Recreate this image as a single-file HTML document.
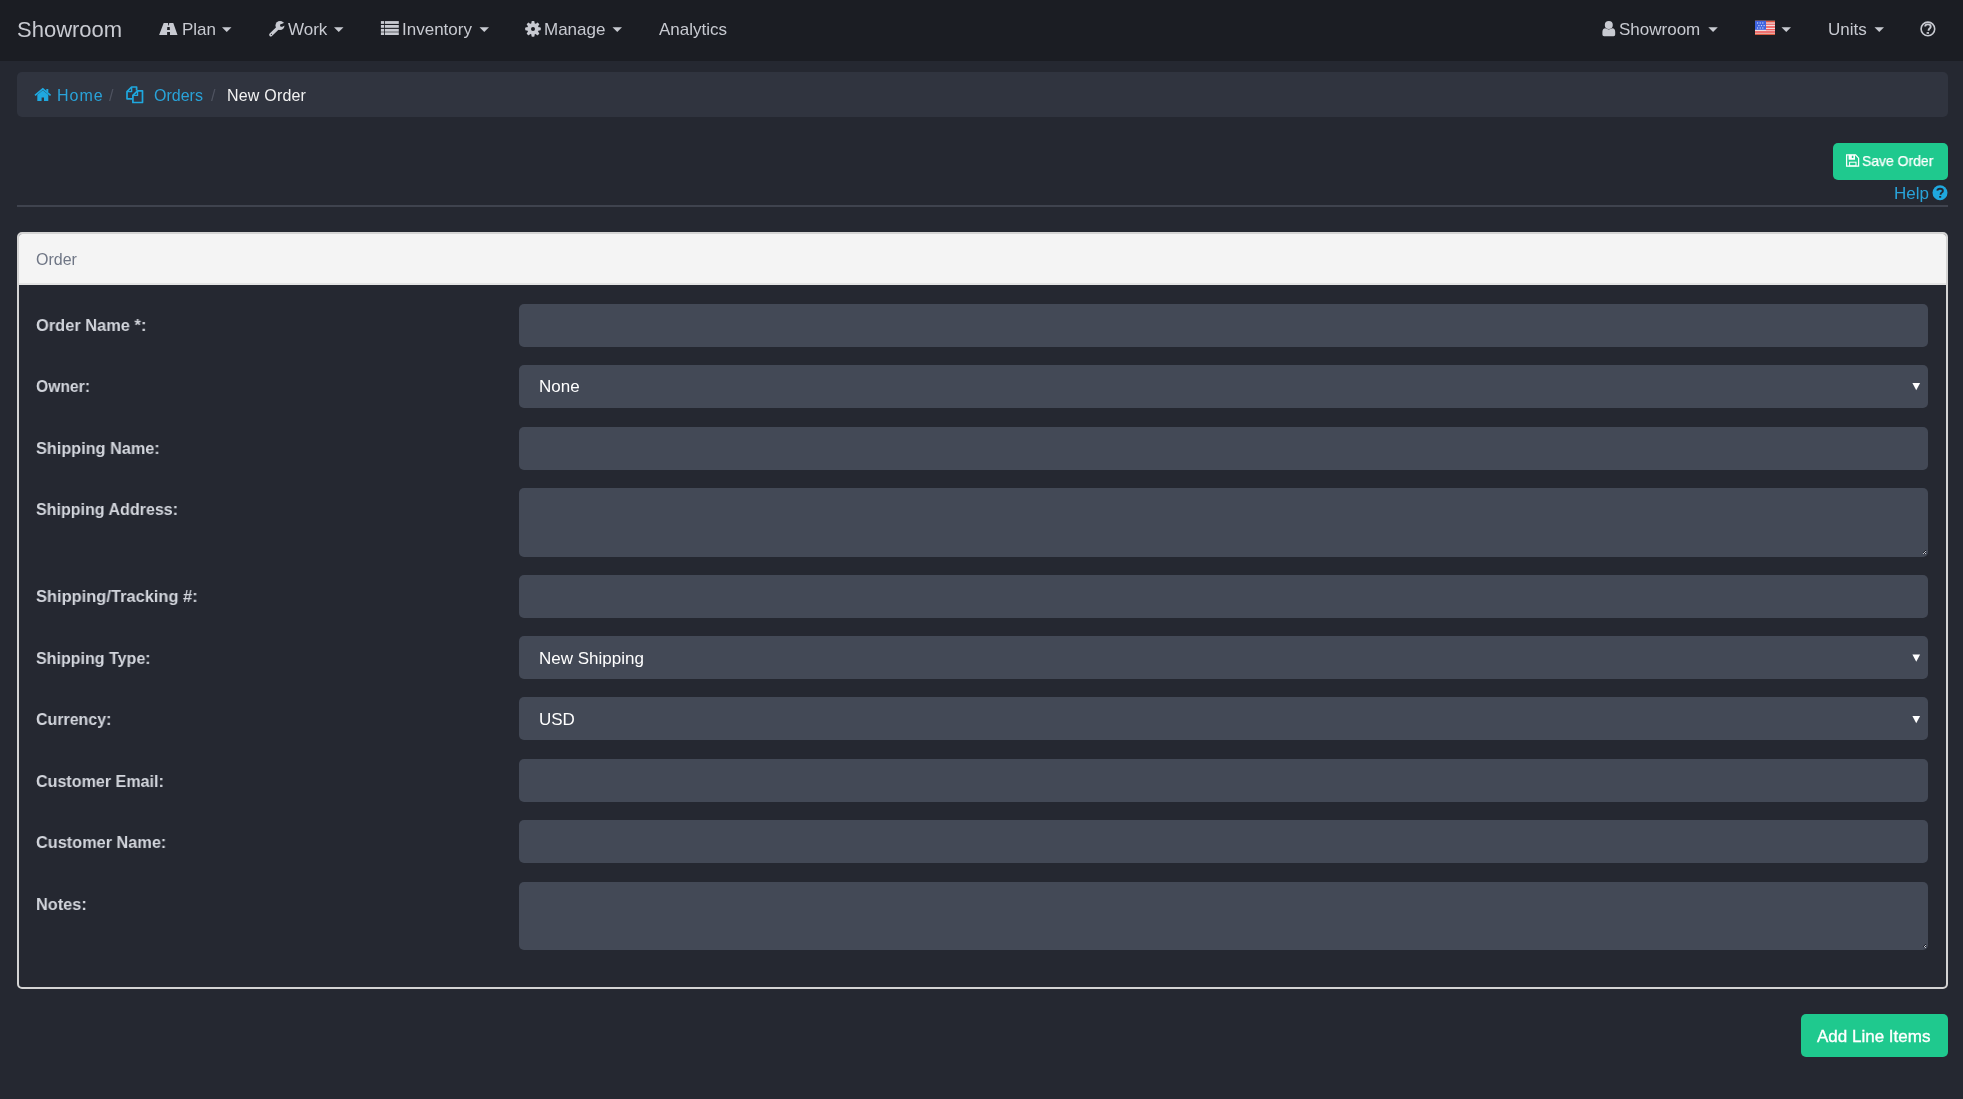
<!DOCTYPE html>
<html><head><meta charset="utf-8">
<style>
*{box-sizing:border-box;margin:0;padding:0}
html,body{width:1963px;height:1099px;overflow:hidden;background:#252831;font-family:"Liberation Sans",sans-serif;-webkit-font-smoothing:antialiased}
.nt,.brand,.bt,.lbl,.sv,.abs{will-change:transform}
.abs{position:absolute}
#nav{position:absolute;left:0;top:0;width:1963px;height:61px;background:#1b1d23}
.nt{position:absolute;top:20px;font-size:17px;line-height:20px;color:#c8cad1;white-space:nowrap}
.brand{position:absolute;top:17px;left:17px;font-size:22px;line-height:26px;color:#c8cad1;white-space:nowrap}
#bc{position:absolute;left:17px;top:72px;width:1931px;height:45px;background:#30343f;border-radius:5px}
.bt{position:absolute;top:87px;font-size:16px;line-height:18px;white-space:nowrap}
.link{color:#29a3d9}
.sep{color:#4f5360}
.btn{position:absolute;background:#1fc98e;border-radius:5px;color:#fff;white-space:nowrap}
#hr{position:absolute;left:17px;top:205px;width:1931px;height:2px;background:#3f434e}
#panel{position:absolute;left:17px;top:232px;width:1931px;height:757px;border:2px solid #d4d4d4;border-radius:5px;background:#252831}
#ph{position:absolute;left:0;top:0;width:1927px;height:51px;background:#f4f4f4;border-bottom:2px solid #e4e4e4;border-radius:3px 3px 0 0}
.lbl{position:absolute;left:36px;font-size:17px;line-height:20px;font-weight:bold;color:#d2d5dc;white-space:nowrap;transform:scaleX(0.952);transform-origin:0 0}
.inp{position:absolute;left:519px;width:1409px;height:43px;background:#434956;border-radius:5px}
.sv{position:absolute;left:539px;font-size:17px;line-height:20px;color:#fff;white-space:nowrap}
#ic{position:absolute;left:0;top:0;width:1963px;height:1099px;pointer-events:none}
</style></head><body>
<div id="nav">
  <div class="brand">Showroom</div>
  <div class="nt" style="left:182px">Plan</div>
  <div class="nt" style="left:288px">Work</div>
  <div class="nt" style="left:402px">Inventory</div>
  <div class="nt" style="left:544px">Manage</div>
  <div class="nt" style="left:659px">Analytics</div>
  <div class="nt" style="left:1619px">Showroom</div>
  <div class="nt" style="left:1828px">Units</div>
</div>
<div id="bc"></div>
<div class="bt link" style="left:57px;letter-spacing:1px">Home</div>
<div class="bt sep" style="left:109px">/</div>
<div class="bt link" style="left:154px">Orders</div>
<div class="bt sep" style="left:211px">/</div>
<div class="bt" style="left:227px;color:#f2f2f2;letter-spacing:0.2px">New Order</div>

<div class="btn" style="left:1833px;top:143px;width:115px;height:37px"><span class="abs" style="left:29px;top:9px;font-size:15px;line-height:18px;transform:scaleX(0.93);transform-origin:0 0;-webkit-text-stroke:0.25px #fff">Save Order</span></div>
<div class="abs link" style="left:1894px;top:184px;font-size:17px;line-height:20px">Help</div>
<div id="hr"></div>

<div id="panel"><div id="ph"><span class="abs" style="left:17px;top:17px;font-size:16px;line-height:18px;color:#6f7685">Order</span></div></div>

<div class="lbl" style="top:316px;transform:scaleX(0.9655)">Order Name *:</div>
<div class="inp" style="top:304px"></div>
<div class="lbl" style="top:377px;transform:scaleX(0.922)">Owner:</div>
<div class="inp" style="top:365px"></div><div class="sv" style="top:377px">None</div>
<div class="lbl" style="top:439px;transform:scaleX(0.956)">Shipping Name:</div>
<div class="inp" style="top:427px"></div>
<div class="lbl" style="top:500px;transform:scaleX(0.944)">Shipping Address:</div>
<div class="inp" style="top:488px;height:69px"></div>
<div class="lbl" style="top:587px;transform:scaleX(0.967)">Shipping/Tracking #:</div>
<div class="inp" style="top:575px"></div>
<div class="lbl" style="top:649px;transform:scaleX(0.943)">Shipping Type:</div>
<div class="inp" style="top:636px"></div><div class="sv" style="top:649px">New Shipping</div>
<div class="lbl" style="top:710px;transform:scaleX(0.938)">Currency:</div>
<div class="inp" style="top:697px"></div><div class="sv" style="top:710px">USD</div>
<div class="lbl" style="top:772px;transform:scaleX(0.946)">Customer Email:</div>
<div class="inp" style="top:759px"></div>
<div class="lbl" style="top:833px;transform:scaleX(0.958)">Customer Name:</div>
<div class="inp" style="top:820px"></div>
<div class="lbl" style="top:895px;transform:scaleX(0.96)">Notes:</div>
<div class="inp" style="top:882px;height:68px"></div>

<div class="btn" style="left:1801px;top:1014px;width:147px;height:43px"><span class="abs" style="left:16px;top:13px;font-size:17px;line-height:20px;-webkit-text-stroke:0.35px #fff">Add Line Items</span></div>

<svg id="ic" width="1963" height="1099" viewBox="0 0 1963 1099">
 <g fill="#c8cad1">
  <!-- road -->
  <path fill-rule="evenodd" d="M163.7 22.9H173.3L177.5 34.9H159.1Z M168 22.9H169.2L168.9 25.4H168.3Z M167.3 27H169.7L169.9 30H167.1Z M167.1 32H170V34.9H167.1Z"/>
  <!-- carets -->
  <path d="M222 27.3h9.5l-4.75 4.6z M334 27.3h9.5l-4.75 4.6z M479.5 27.3h9.5l-4.75 4.6z M612.5 27.3h9.5l-4.75 4.6z M1708.3 27.3h9.5l-4.75 4.6z M1781.5 27.3h9.5l-4.75 4.6z M1874.5 27.3h9.5l-4.75 4.6z"/>
  <!-- list -->
  <rect x="380.9" y="21.1" width="3.2" height="2.8"/><rect x="384.9" y="21.1" width="13.9" height="2.8"/>
  <rect x="380.9" y="25" width="3.2" height="2.8"/><rect x="384.9" y="25" width="13.9" height="2.8"/>
  <rect x="380.9" y="28.9" width="3.2" height="2.8"/><rect x="384.9" y="28.9" width="13.9" height="2.8"/>
  <rect x="380.9" y="32.3" width="3.2" height="2.7"/><rect x="384.9" y="32.3" width="13.9" height="2.7"/>
  <!-- user -->
  <circle cx="1608.8" cy="24.9" r="4"/>
  <path d="M1605.4 28.3Q1602.4 28.6 1602.4 32V34.6Q1602.4 36.2 1604 36.2H1613.6Q1615.2 36.2 1615.2 34.6V32Q1615.2 28.6 1612.2 28.3Q1608.8 30.6 1605.4 28.3Z"/>
 </g>
 <!-- wrench -->
 <g>
  <mask id="wm"><rect x="260" y="15" width="30" height="25" fill="#fff"/><circle cx="281.4" cy="25.4" r="1.35" fill="#000"/><rect x="281.4" y="24.05" width="6" height="2.7" fill="#000" transform="rotate(-22 281.4 25.4)"/></mask>
  <circle cx="280" cy="25.5" r="4.5" fill="#c8cad1" mask="url(#wm)"/>
  <path d="M277.8 28 L270.8 34.8" stroke="#c8cad1" stroke-width="3.3" stroke-linecap="round"/>
  <circle cx="271.4" cy="34.3" r="0.6" fill="#1b1d23"/>
 </g>
 <!-- gear -->
 <g fill="#c8cad1" transform="translate(533 28.9)">
  <circle r="5.8"/>
  <rect x="-1.55" y="-7.8" width="3.1" height="4" rx="0.9"/>
  <rect x="-1.55" y="-7.8" width="3.1" height="4" rx="0.9" transform="rotate(45)"/>
  <rect x="-1.55" y="-7.8" width="3.1" height="4" rx="0.9" transform="rotate(90)"/>
  <rect x="-1.55" y="-7.8" width="3.1" height="4" rx="0.9" transform="rotate(135)"/>
  <rect x="-1.55" y="-7.8" width="3.1" height="4" rx="0.9" transform="rotate(180)"/>
  <rect x="-1.55" y="-7.8" width="3.1" height="4" rx="0.9" transform="rotate(225)"/>
  <rect x="-1.55" y="-7.8" width="3.1" height="4" rx="0.9" transform="rotate(270)"/>
  <rect x="-1.55" y="-7.8" width="3.1" height="4" rx="0.9" transform="rotate(315)"/>
  <circle r="2" fill="#1b1d23"/>
 </g>
 <!-- flag -->
 <g>
  <rect x="1755" y="20.8" width="20" height="14.2" fill="#f1dcdc"/>
  <rect x="1755" y="20.8" width="20" height="1.6" fill="#e0533f"/>
  <rect x="1766" y="23.6" width="9" height="1.3" fill="#ef6b6b"/>
  <rect x="1766" y="26.3" width="9" height="1.4" fill="#ee4545"/>
  <rect x="1766" y="29" width="9" height="1.3" fill="#ef5a5a"/>
  <rect x="1755" y="31.3" width="20" height="1.4" fill="#ee4444"/>
  <rect x="1755" y="33.6" width="20" height="1.4" fill="#d9593f"/>
  <rect x="1755" y="20.8" width="11" height="9" fill="#3f63e0"/>
  <g fill="#c9d6f7"><rect x="1757" y="22.4" width="1.2" height="1.2"/><rect x="1759.6" y="22.4" width="1.2" height="1.2"/><rect x="1762.2" y="22.4" width="1.2" height="1.2"/><rect x="1758.3" y="25" width="1.2" height="1.2"/><rect x="1760.9" y="25" width="1.2" height="1.2"/><rect x="1763.5" y="25" width="1.2" height="1.2"/><rect x="1757" y="27.4" width="1.2" height="1.2"/><rect x="1759.6" y="27.4" width="1.2" height="1.2"/><rect x="1762.2" y="27.4" width="1.2" height="1.2"/></g>
 </g>
 <!-- question circle nav -->
 <g fill="none" stroke="#c8cad1">
  <circle cx="1927.9" cy="28.9" r="6.8" stroke-width="1.6"/>
  <path d="M1925.2 26.6C1925.2 25 1926.4 24.4 1927.9 24.4C1929.5 24.4 1930.7 25.3 1930.7 26.7C1930.7 28.3 1928.6 28.6 1928.6 30.2V30.8" stroke-width="1.9"/>
 </g>
 <rect x="1926.6" y="32.1" width="2.4" height="1.7" fill="#c8cad1"/>
 <!-- home -->
 <g fill="#1fa8df">
  <path d="M35 95.3L42.8 88.9L50.6 95.3" fill="none" stroke="#1fa8df" stroke-width="1.7"/>
  <rect x="46.3" y="89" width="2" height="3.2"/>
  <path d="M37.3 100.9V94.7L42.8 90.3L48.3 94.7V100.9H44V97.5H41.6V100.9Z"/>
 </g>
 <!-- copy -->
 <g fill="none" stroke="#1fa8df" stroke-width="1.7" stroke-linejoin="round">
  <path d="M136.6 90.4V87H131.6L127 91.6V98.8H132.4"/>
  <path d="M132.9 95.4L137.5 90.8H142.5V102.5H132.9Z"/>
  <path d="M127 91.6H131.6V87" stroke-width="1.4"/>
  <path d="M132.9 95.4H137.5V90.8" stroke-width="1.4"/>
 </g>
 <!-- save -->
 <g fill="none" stroke="#fff" stroke-width="1.25">
  <path d="M1846.6 154.8H1855.6L1858.6 158.2V166.2H1846.6Z"/>
  <rect x="1849.6" y="162.2" width="6.4" height="3.6" stroke-width="1"/>
 </g>
 <path fill="#fff" fill-rule="evenodd" d="M1848.6 154.8H1855V159.8H1848.6Z M1851.8 155.6H1853.4V158.1H1851.8Z"/>
 <!-- help blue -->
 <circle cx="1940" cy="192.7" r="7.5" fill="#1fa8df"/>
 <path d="M1937.3 190.6C1937.5 189.3 1938.6 188.7 1940 188.7C1941.6 188.7 1942.9 189.6 1942.9 190.9C1942.9 192.5 1940.6 192.6 1940.6 194.2V194.7" fill="none" stroke="#252831" stroke-width="1.9"/>
 <rect x="1939.2" y="196" width="2" height="1.7" fill="#252831"/>
 <!-- select arrows -->
 <g fill="#fff">
  <path d="M1912.4 383H1920.1L1916.25 390.3Z"/>
  <path d="M1912.4 654.5H1920.1L1916.25 661.8Z"/>
  <path d="M1912.4 716H1920.1L1916.25 723.3Z"/>
 </g>
 <!-- resize grips -->
 <g><rect x="1925" y="550" width="1" height="1" fill="#1c1e27"/><rect x="1924" y="551" width="1" height="1" fill="#1c1e27"/><rect x="1925" y="551" width="1" height="1" fill="#c3c6ce"/><rect x="1923" y="552" width="1" height="1" fill="#1c1e27"/><rect x="1924" y="552" width="1" height="1" fill="#c3c6ce"/><rect x="1925" y="552" width="1" height="1" fill="#1c1e27"/><rect x="1923" y="553" width="1" height="1" fill="#c3c6ce"/><rect x="1924" y="553" width="1" height="1" fill="#1c1e27"/><rect x="1925" y="553" width="1" height="1" fill="#c3c6ce"/><rect x="1925" y="944" width="1" height="1" fill="#1c1e27"/><rect x="1924" y="945" width="1" height="1" fill="#1c1e27"/><rect x="1925" y="945" width="1" height="1" fill="#c3c6ce"/><rect x="1923" y="946" width="1" height="1" fill="#1c1e27"/><rect x="1924" y="946" width="1" height="1" fill="#c3c6ce"/><rect x="1925" y="946" width="1" height="1" fill="#1c1e27"/><rect x="1925" y="947" width="1" height="1" fill="#c3c6ce"/></g>
</svg>
</body></html>
